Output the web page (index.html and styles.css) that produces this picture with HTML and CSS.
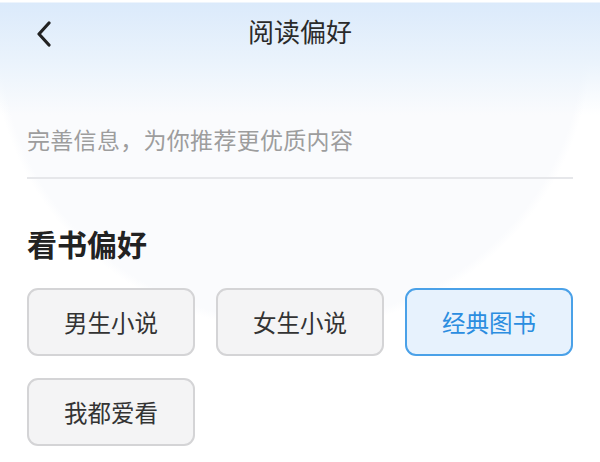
FILE: index.html
```html
<!DOCTYPE html>
<html lang="zh">
<head>
<meta charset="utf-8">
<link rel="stylesheet" href="styles.css">
</head>
<body>
<div class="page">
  <header class="nav">
    <span class="back">
      <svg width="18" height="26" viewBox="0 0 18 26"><path d="M14 2 L4 13 L14 24" fill="none" stroke="#222" stroke-width="3.2" stroke-linecap="round" stroke-linejoin="round"/></svg>
    </span>
    <h1 class="title">阅读偏好</h1>
  </header>
  <main class="content">
    <p class="subtitle">完善信息，为你推荐更优质内容</p>
    <div class="divider"></div>
    <h2 class="heading">看书偏好</h2>
    <div class="options">
      <div class="opt">男生小说</div>
      <div class="opt">女生小说</div>
      <div class="opt selected">经典图书</div>
      <div class="opt">我都爱看</div>
    </div>
  </main>
</div>
</body>
</html>
```
FILE: styles.css
```css
* { box-sizing: border-box; margin: 0; padding: 0; }
html, body { width: 600px; height: 462px; overflow: hidden; }
body {
  font-family: "Noto Sans CJK SC", "Noto Sans", sans-serif;
  background: #ffffff;
}
.page {
  height: 462px;
  background:
    linear-gradient(180deg, #ffffff 0px, #ffffff 2px, #dbeafb 3px, #eaf3fc 60px, rgba(250,251,253,0) 115px),
    radial-gradient(ellipse 300px 290px at 292px 40px, #fafbfd 97%, rgba(255,255,255,0) 100%),
    #ffffff;
}
.nav {
  height: 66px;
  display: flex;
  align-items: center;
  justify-content: center;
  position: relative;
}
.back {
  position: absolute;
  left: 35px;
  top: 21px;
  display: flex;
}
.title {
  font-size: 26px;
  font-weight: 400;
  color: #2a2a2a;
  margin-top: -6px;
}
.content {
  padding: 0 27px;
}
.subtitle {
  margin-top: 56px;
  font-size: 23px;
  line-height: 34px;
  color: #9d9d9d;
  letter-spacing: 0.3px;
}
.divider {
  margin-top: 21px;
  height: 2px;
  background: #e6e7ea;
}
.heading {
  margin-top: 46px;
  font-size: 30px;
  line-height: 36px;
  font-weight: 700;
  color: #222;
}
.options {
  margin-top: 27px;
  display: grid;
  grid-template-columns: repeat(3, 168px);
  column-gap: 21px;
  row-gap: 22px;
}
.opt {
  height: 68px;
  border: 2px solid #d4d4d6;
  border-radius: 11px;
  background: #f4f4f5;
  display: flex;
  align-items: center;
  justify-content: center;
  font-size: 23.5px;
  color: #333;
}
.opt.selected {
  border-color: #4aa1e8;
  background: #e7f2fd;
  color: #2b8de0;
}
```
